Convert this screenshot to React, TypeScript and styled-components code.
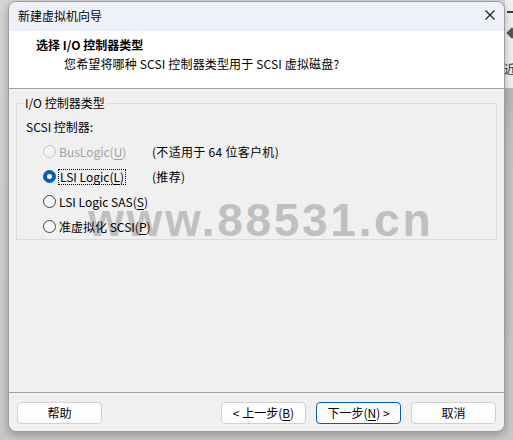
import React from 'react';
import styled, { createGlobalStyle } from 'styled-components';

const Global = createGlobalStyle`
  html, body { margin: 0; padding: 0; }
  body {
    font-family: "Noto Sans CJK SC", "Microsoft YaHei", sans-serif;
    font-size: 12px;
    color: #000;
    background: #cdcdcd;
  }
`;

const Page = styled.div`
  position: relative;
  width: 513px;
  height: 440px;
  display: flex;
  align-items: flex-start;
  overflow: hidden;
  background: linear-gradient(to bottom, #d6d6d6, #c9c9c9);
`;

const Gutter = styled.div`
  flex: none;
  width: 8px;
  height: 440px;
`;

const RightStrip = styled.div`
  flex: none;
  width: 8px;
  height: 440px;
  display: flex;
  flex-direction: column;
  align-items: flex-start;
  overflow: hidden;
  background: linear-gradient(to bottom, #f1f1f1 0, #f1f1f1 88px, #b8b8b8 88px, #c4c4c4 140px, #c8c8c8 100%);
`;

const StripDash = styled.div`
  margin: 11px 0 0 2px;
  width: 6px;
  height: 2px;
  background: #3a3a3a;
`;

const StripDiamond = styled.div`
  margin: 16px 0 0 3px;
  width: 8px;
  height: 8px;
  background: #555;
  transform: rotate(45deg);
`;

const StripChar = styled.div`
  margin: 24px 0 0 -1px;
  font-size: 12px;
  line-height: 16px;
  color: #333;
`;

const Dialog = styled.div`
  position: relative;
  z-index: 1;
  flex: none;
  margin-top: 1px;
  width: 497px;
  height: 431px;
  box-sizing: border-box;
  border: 1px solid #9c9c9c;
  border-radius: 8px;
  overflow: hidden;
  background: #f0f0f0;
  display: flex;
  flex-direction: column;
  box-shadow: 0 3px 10px rgba(0, 0, 0, 0.28);
`;

const TitleBar = styled.div`
  flex: none;
  height: 29px;
  box-sizing: border-box;
  padding: 0 9px 0 9px;
  display: flex;
  align-items: center;
  justify-content: space-between;
  background: #eef2f8;
`;

const TitleText = styled.span`
  font-size: 12px;
  line-height: 16px;
  margin-top: -1px;
`;

const CloseIcon = styled.svg`
  display: block;
  width: 10px;
  height: 10px;
  margin-top: -3px;
`;

const Header = styled.div`
  flex: none;
  height: 58px;
  box-sizing: border-box;
  padding: 6px 0 0 27px;
  background: #fff;
  border-bottom: 1px solid #a0a0a0;
`;

const HeaderTitle = styled.div`
  font-weight: 700;
  font-size: 12px;
  line-height: 16px;
`;

const HeaderSub = styled.div`
  margin: 3px 0 0 28px;
  font-size: 12px;
  line-height: 16px;
  letter-spacing: 0.15px;
`;

const Body = styled.div`
  flex: none;
  height: 303px;
  box-sizing: border-box;
  padding: 6px 7px 0 7px;
`;

const GroupBox = styled.fieldset`
  margin: 0;
  padding: 0 0 0 9px;
  height: 145px;
  box-sizing: border-box;
  border: 1px solid #dcdcdc;
  min-inline-size: 0;
`;

const Legend = styled.legend`
  margin-left: -3px;
  padding: 0 2px;
  font-size: 12px;
  line-height: 16px;
`;

const SectionLabel = styled.div`
  margin-top: 8px;
  font-size: 12px;
  line-height: 16px;
`;

const OptionGrid = styled.div`
  position: relative;
  z-index: 1;
  margin-top: 4px;
  display: grid;
  grid-template-columns: 126px auto;
  grid-auto-rows: 25px;
  align-items: center;
`;

const RadioRow = styled.div<{ $disabled?: boolean }>`
  display: flex;
  align-items: center;
  padding-left: 17px;
  color: ${(p) => (p.$disabled ? '#a2a2a2' : '#000')};
`;

const RadioCircle = styled.span<{ $checked?: boolean; $disabled?: boolean }>`
  flex: none;
  position: relative;
  width: 13px;
  height: 13px;
  box-sizing: border-box;
  border-radius: 50%;
  border: 1px solid ${(p) => (p.$checked ? '#005fb8' : p.$disabled ? '#c6c6c6' : '#3f3f3f')};
  background: ${(p) => (p.$checked ? '#005fb8' : p.$disabled ? '#f3f3f3' : '#f7f7f7')};
  &::after {
    content: '';
    display: ${(p) => (p.$checked ? 'block' : 'none')};
    position: absolute;
    left: 3px;
    top: 3px;
    width: 5px;
    height: 5px;
    border-radius: 50%;
    background: #fff;
  }
`;

const RadioLabel = styled.span<{ $focused?: boolean }>`
  margin-left: ${(p) => (p.$focused ? '2px' : '3px')};
  padding: 0 ${(p) => (p.$focused ? '1px' : '0')};
  line-height: 14px;
  font-size: 12px;
  border: ${(p) => (p.$focused ? '1px dotted #000' : 'none')};
`;

const Note = styled.span`
  font-size: 12px;
  line-height: 16px;
  letter-spacing: 0.3px;
`;

const Footer = styled.div`
  flex: none;
  height: 39px;
  box-sizing: border-box;
  border-top: 1px solid #a0a0a0;
  padding: 9px 8px 0 8px;
  display: flex;
  align-items: flex-start;
  gap: 10px;
`;

const Spacer = styled.div`
  flex: 1;
`;

const Button = styled.button<{ $primary?: boolean }>`
  width: 85px;
  height: 22px;
  box-sizing: border-box;
  padding: 0;
  border-radius: 4px;
  border: 1px solid ${(p) => (p.$primary ? '#005fb8' : '#d0d0d0')};
  background: #fdfdfd;
  font-family: "Noto Sans CJK SC", "Microsoft YaHei", sans-serif;
  font-size: 12px;
  line-height: 16px;
  color: #000;
`;

const Watermark = styled.div`
  position: absolute;
  z-index: 0;
  left: 79px;
  top: 195px;
  font-family: "Liberation Sans", Arial, sans-serif;
  font-weight: 700;
  font-size: 46px;
  line-height: 46px;
  letter-spacing: 2.7px;
  color: #c0c0c0;
  white-space: nowrap;
  pointer-events: none;
`;

const U = styled.span`
  text-decoration: underline;
  text-underline-offset: 2px;
`;

export default function App() {
  return (
    <>
      <Global />
      <Page>
        <Gutter />
        <Dialog>
          <TitleBar>
            <TitleText>新建虚拟机向导</TitleText>
            <CloseIcon viewBox="0 0 10 10">
              <path d="M0.5 0.5 L9.5 9.5 M9.5 0.5 L0.5 9.5" stroke="#1a1a1a" strokeWidth="1.1" fill="none" />
            </CloseIcon>
          </TitleBar>
          <Header>
            <HeaderTitle>选择 I/O 控制器类型</HeaderTitle>
            <HeaderSub>您希望将哪种 SCSI 控制器类型用于 SCSI 虚拟磁盘?</HeaderSub>
          </Header>
          <Watermark>www.88531.cn</Watermark>
          <Body>
            <GroupBox>
              <Legend>I/O 控制器类型</Legend>
              <SectionLabel>SCSI 控制器:</SectionLabel>
              <OptionGrid>
                <RadioRow $disabled>
                  <RadioCircle $disabled />
                  <RadioLabel>BusLogic(<U>U</U>)</RadioLabel>
                </RadioRow>
                <Note>(不适用于 64 位客户机)</Note>
                <RadioRow>
                  <RadioCircle $checked />
                  <RadioLabel $focused>LSI Logic(<U>L</U>)</RadioLabel>
                </RadioRow>
                <Note>(推荐)</Note>
                <RadioRow>
                  <RadioCircle />
                  <RadioLabel>LSI Logic SAS(<U>S</U>)</RadioLabel>
                </RadioRow>
                <span />
                <RadioRow>
                  <RadioCircle />
                  <RadioLabel>准虚拟化 SCSI(<U>P</U>)</RadioLabel>
                </RadioRow>
                <span />
              </OptionGrid>
            </GroupBox>
          </Body>
          <Footer>
            <Button>帮助</Button>
            <Spacer />
            <Button>&lt; 上一步(<U>B</U>)</Button>
            <Button $primary>下一步(<U>N</U>) &gt;</Button>
            <Button>取消</Button>
          </Footer>
        </Dialog>
        <RightStrip>
          <StripDash />
          <StripDiamond />
          <StripChar>近</StripChar>
        </RightStrip>
      </Page>
    </>
  );
}
